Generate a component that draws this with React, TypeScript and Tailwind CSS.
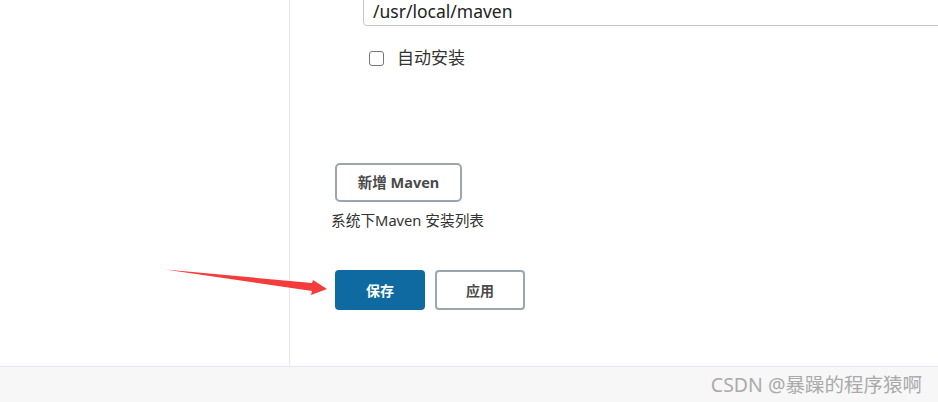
import React from "react";

export default function App() {
  const cjk = { fontFamily: '"Segoe UI", "Noto Sans", "Noto Sans CJK SC", sans-serif' };
  return (
    <div className="w-[938px] h-[402px] bg-white overflow-hidden flex flex-col relative" style={cjk}>
      <div className="flex h-[366px]">
        <div className="w-[290px] shrink-0 border-r border-[#e8e8e8]" />
        <div className="flex-1 relative">
          <div className="ml-[73px] mt-[-20px] h-[46px] border border-[#c8c8c8] rounded-[4px] flex items-end pl-[9px] pb-[5px] text-[17.5px] text-[#222] leading-[18px] w-[700px]">
            /usr/local/maven
          </div>
          <div className="ml-[79px] mt-[22px] flex items-center h-[20px]">
            <div className="w-[15px] h-[15px] border border-[#767676] rounded-[3px] bg-white" />
            <span className="ml-[13px] text-[17px] text-[#333] leading-[20px]">自动安装</span>
          </div>
          <div className="ml-[45px] mt-[95px] w-[127px] h-[39px] border-2 border-[#9ba7af] rounded-[5px] flex items-center justify-center text-[14.5px] font-bold text-[#4a4a4a]">
            新增 Maven
          </div>
          <div className="ml-[41px] mt-[9px] text-[14.7px] text-[#333] leading-[18px]">系统下Maven 安装列表</div>
          <div className="ml-[45px] mt-[41px] flex gap-[10px]">
            <div className="w-[90px] h-[40px] rounded-[4px] bg-[#0e6aa0] flex items-center justify-center text-white text-[14px] font-bold">
              保存
            </div>
            <div className="w-[90px] h-[40px] rounded-[4px] border-2 border-[#9ba7af] flex items-center justify-center text-[#4a4a4a] text-[14px] font-bold">
              应用
            </div>
          </div>
        </div>
      </div>
      <div className="flex-1 bg-[#f7f7f7] border-t border-[#e3e9ee] flex items-center justify-end pr-[16px]">
        <span className="text-[19.5px] text-[#aaaaaa] leading-[22px]">CSDN @暴躁的程序猿啊</span>
      </div>
      <svg className="absolute left-0 top-0 pointer-events-none" width="938" height="402">
        <polygon points="165,269.5 312,283 313,280 327,289 311,295 312,291" fill="#f53c3c" />
      </svg>
    </div>
  );
}
